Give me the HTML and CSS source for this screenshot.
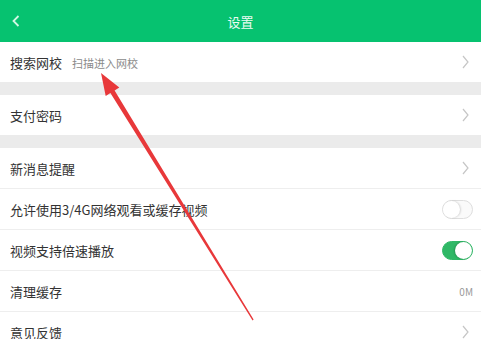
FILE: index.html
```html
<!DOCTYPE html>
<html lang="zh-CN">
<head>
    <meta charset="UTF-8">
    <meta name="viewport" content="width=device-width, initial-scale=1.0">
    <title>设置</title>
    <link rel="stylesheet" href="styles.css">
</head>
<body>
    <header class="top-bar">
        <span class="back">
            <svg width="8" height="12" viewBox="0 0 8 12"><path d="M6.5 1 L1.5 6 L6.5 11" fill="none" stroke="currentColor" stroke-width="1.8"/></svg>
        </span>
        <h1 class="title">设置</h1>
    </header>

    <section class="group">
        <div class="row">
            <span class="label">搜索网校</span>
            <span class="hint">扫描进入网校</span>
            <span class="chevron"><svg width="7" height="14" viewBox="0 0 7 14"><path d="M1 1 L6 7 L1 13" fill="none" stroke="currentColor" stroke-width="1.2"/></svg></span>
        </div>
    </section>

    <section class="group">
        <div class="row">
            <span class="label">支付密码</span>
            <span class="chevron"><svg width="7" height="14" viewBox="0 0 7 14"><path d="M1 1 L6 7 L1 13" fill="none" stroke="currentColor" stroke-width="1.2"/></svg></span>
        </div>
    </section>

    <section class="group">
        <div class="row">
            <span class="label">新消息提醒</span>
            <span class="chevron"><svg width="7" height="14" viewBox="0 0 7 14"><path d="M1 1 L6 7 L1 13" fill="none" stroke="currentColor" stroke-width="1.2"/></svg></span>
        </div>
        <div class="row">
            <span class="label">允许使用3/4G网络观看或缓存视频</span>
            <span class="switch"><span class="knob"></span></span>
        </div>
        <div class="row">
            <span class="label">视频支持倍速播放</span>
            <span class="switch on"><span class="knob"></span></span>
        </div>
        <div class="row">
            <span class="label">清理缓存</span>
            <span class="value">0M</span>
        </div>
        <div class="row">
            <span class="label">意见反馈</span>
            <span class="chevron"><svg width="7" height="14" viewBox="0 0 7 14"><path d="M1 1 L6 7 L1 13" fill="none" stroke="currentColor" stroke-width="1.2"/></svg></span>
        </div>
    </section>

    <!-- annotation arrow drawn over the screen -->
    <svg class="arrow" width="481" height="339" viewBox="0 0 481 339">
        <polygon points="101,73 119.3,87.5 114.6,90.4 253.6,319.6 252.6,320.4 110.4,93 105.7,95.9" fill="#e8383a"/>
    </svg>
</body>
</html>
```

FILE: styles.css
```css
/* General */
body {
    margin: 0;
    font-family: "Noto Sans CJK SC", "Noto Sans", sans-serif;
    background-color: #ebebeb;
    color: #333;
    font-size: 13px;
    overflow: hidden;
}

/* Header */
.top-bar {
    height: 42px;
    background-color: #06c270;
    display: flex;
    align-items: center;
    justify-content: center;
    position: relative;
}
.back {
    position: absolute;
    left: 12px;
    top: 12px;
    color: #d4f6e4;
}
.title {
    margin: 0;
    font-size: 13px;
    font-weight: normal;
    color: #ecfbf3;
}

/* Groups */
.group {
    background: white;
    margin-bottom: 13px;
}
.row {
    height: 40px;
    display: flex;
    align-items: center;
    padding: 0 8px 0 10px;
    border-bottom: 1px solid #eeeeee;
}
.row:last-child {
    border-bottom: none;
}
.label {
    flex: none;
    padding-top: 1px;
}
.hint {
    margin-left: 10px;
    font-size: 11px;
    color: #8a8a8a;
    padding-top: 1px;
}
.chevron {
    margin-left: auto;
    color: #c6c6c6;
    display: flex;
    margin-right: 4px;
}
.value {
    margin-left: auto;
    font-size: 10px;
    color: #9a9a9a;
}

/* Switch */
.switch {
    margin-left: auto;
    width: 29px;
    height: 17px;
    border-radius: 10px;
    border: 1px solid #dedede;
    background: #fafafa;
    position: relative;
}
.switch .knob {
    position: absolute;
    left: 0;
    top: 0;
    width: 17px;
    height: 17px;
    border-radius: 50%;
    background: white;
    box-shadow: 1px 0 2px rgba(0, 0, 0, 0.15);
}
.switch.on {
    background: #2fb866;
    border-color: #2fb866;
}
.switch.on .knob {
    left: 12px;
    box-shadow: -1px 0 2px rgba(0, 0, 0, 0.2);
}

/* Arrow overlay */
.arrow {
    position: absolute;
    left: 0;
    top: 0;
    pointer-events: none;
}
```
